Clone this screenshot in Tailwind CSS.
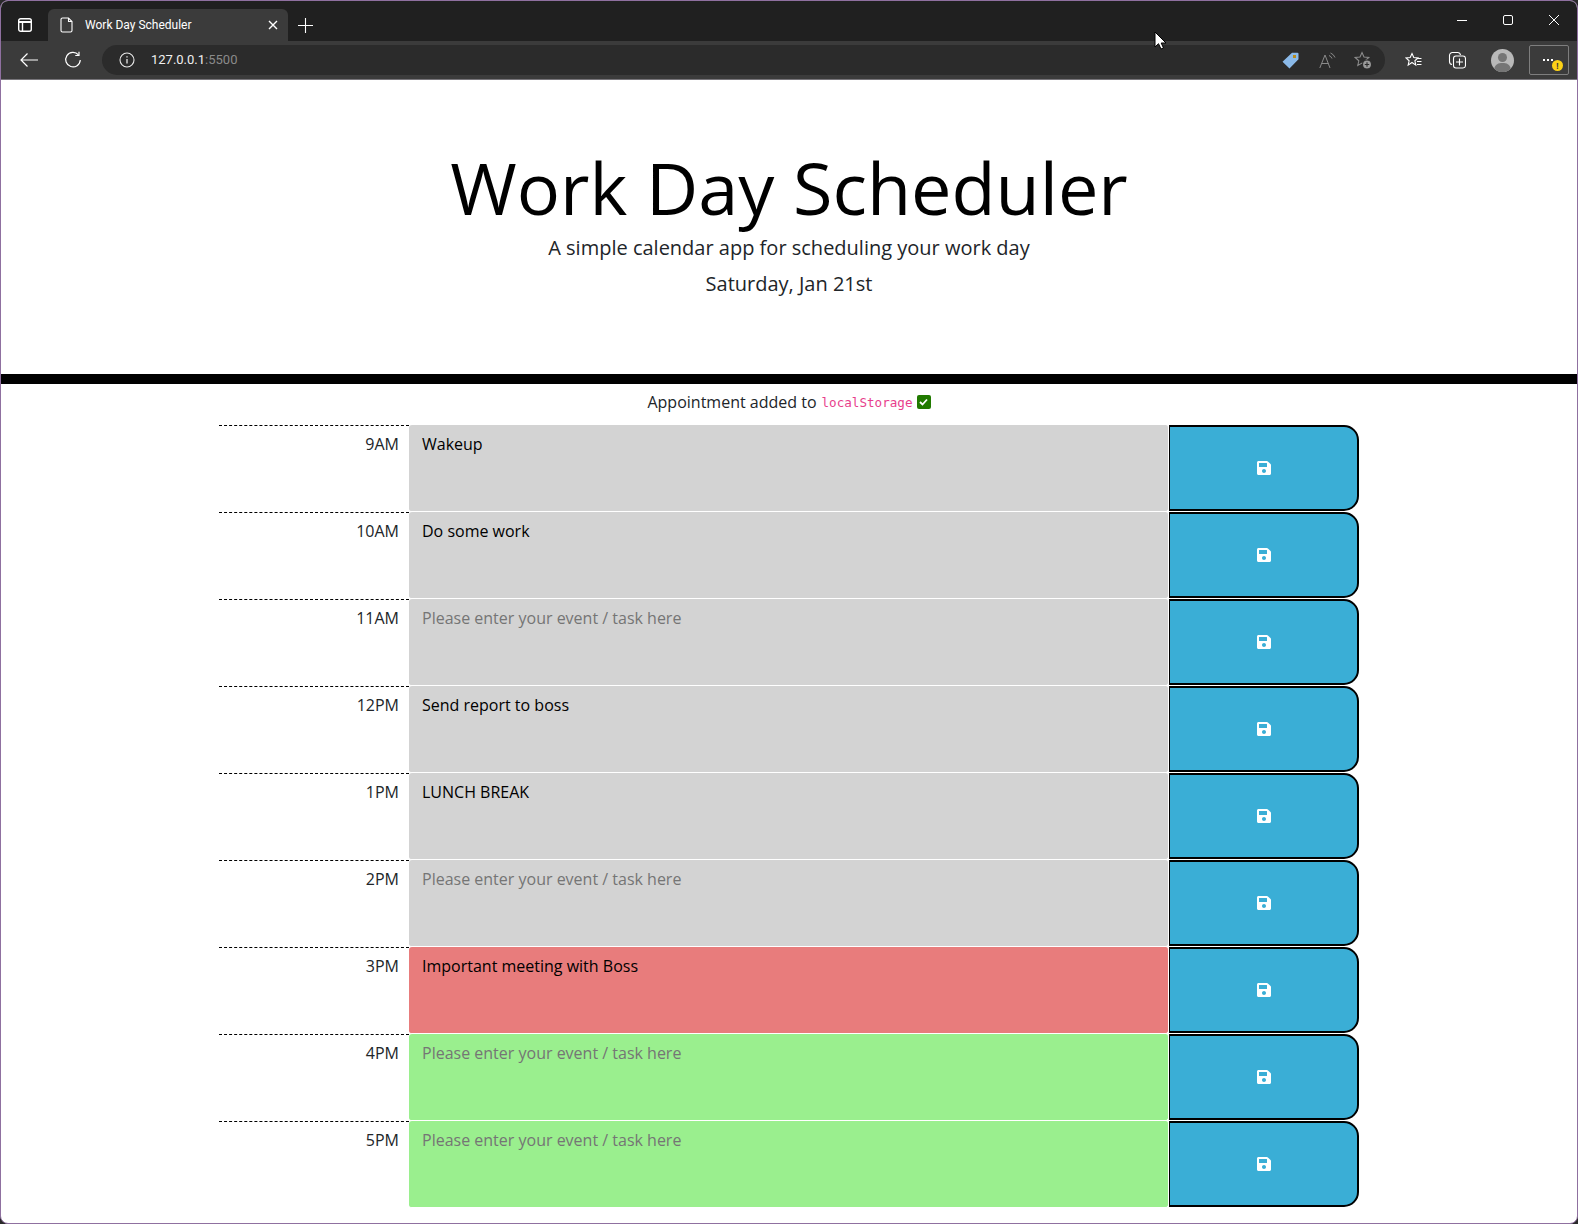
<!DOCTYPE html>
<html lang="en">
<head>
  <meta charset="UTF-8">
  <title>Work Day Scheduler</title>
  <script src="https://cdn.jsdelivr.net/npm/@tailwindcss/browser@4"></script>
</head>
<body class="bg-[#2a2a2a]">
  <div class="relative w-[1578px] h-[1224px] overflow-hidden rounded-[8px] border border-[#8f70a0] bg-white flex flex-col font-['Open_Sans',sans-serif] text-[#212529]">

    <!-- TAB STRIP -->
    <div class="h-[40px] bg-[#202020] flex items-end shrink-0 pl-[4px] text-white">
      <div class="w-[40px] h-[32px] flex items-center justify-center">
        <svg width="16" height="16" viewBox="0 0 16 16" fill="none" stroke="white" stroke-width="1.4"><rect x="1.700" y="1.700" width="12.600" height="12.600" rx="2"/><path d="M1.700 5h12.600" stroke-width="2"/><path d="M5.500 5v9"/></svg>
      </div>
      <div class="ml-[3px] w-[240px] h-[32px] bg-[#3b3b3b] rounded-t-[6px] flex items-center pl-[12px] pr-[10px]">
        <svg width="14" height="16" viewBox="0 0 14 16" fill="none" stroke="white" stroke-width="1.100"><path d="M2.500 1h6l3.500 3.500V13.500a1.500 1.500 0 0 1-1.500 1.500H2.500a1.500 1.500 0 0 1-1.500-1.500V2.500A1.500 1.500 0 0 1 2.500 1z"/><path d="M8.500 1v3.500H12"/></svg>
        <span class="ml-[11px] text-[12px] font-['Roboto',sans-serif] flex-1 truncate">Work Day Scheduler</span>
        <svg width="10" height="10" viewBox="0 0 10 10" stroke="white" stroke-width="1.400"><path d="M1 1l8 8M9 1l-8 8"/></svg>
      </div>
      <div class="w-[35px] h-[32px] flex items-center justify-center">
        <svg width="15" height="15" viewBox="0 0 15 15" stroke="white" stroke-width="1.100"><path d="M7.500 0v15M0 7.500h15"/></svg>
      </div>
      <div class="flex-1"></div>
      <div class="h-[38px] self-start flex items-center pr-[15px] gap-[30px]">
        <svg width="16" height="16" viewBox="0 0 16 16" stroke="white" stroke-width="1"><path d="M3 8.500h10"/></svg>
        <svg width="16" height="16" viewBox="0 0 16 16" fill="none" stroke="white" stroke-width="1"><rect x="3.500" y="3.500" width="9" height="9" rx="1.500"/></svg>
        <svg width="16" height="16" viewBox="0 0 16 16" stroke="white" stroke-width="1"><path d="M3 3l10 10M13 3L3 13"/></svg>
      </div>
    </div>

    <!-- TOOLBAR -->
    <div class="h-[39px] bg-[#3b3b3b] border-b-[1px] border-[#77757a] flex items-center shrink-0 pl-[18px] pr-[8px] text-white">
      <svg width="20" height="16" viewBox="0 0 20 16" fill="none" stroke="white" stroke-width="1.200"><path d="M19 8H2M8.500 1.500L2 8l6.500 6.500"/></svg>
      <svg class="ml-[25px]" width="18" height="18" viewBox="0 0 18 18" fill="none" stroke="white" stroke-width="1.200"><path d="M14.500 3.800A7.300 7.300 0 1 0 16.300 9"/><path d="M15 .8v3.700h-3.700"/></svg>
      <div class="ml-[20px] w-[1284px] h-[30px] bg-[#2b2b2b] rounded-[15px] flex items-center pl-[17px] pr-[13px]">
        <svg width="16" height="16" viewBox="0 0 16 16" fill="none" stroke="#e8e8e8" stroke-width="1.100"><circle cx="8" cy="8" r="7"/><path d="M8 7v4.500" stroke-width="1.300"/><path d="M8 4.200v1.300" stroke-width="1.300"/></svg>
        <span class="ml-[16px] text-[13px] font-['Roboto',sans-serif] text-[#f0f0f0]">127.0.0.1<span class="text-[#8a8a8a]">:5500</span></span>
        <div class="flex-1"></div>
        <svg width="17" height="17" viewBox="0 0 17 17"><path d="M10 .8h5.500a1 1 0 0 1 1 1v5.500L7.500 16.500.5 9.800z" fill="#8ab9e8"/><rect x="11" y="3" width="3" height="3" fill="#b78a1e"/></svg>
        <svg class="ml-[20px]" width="17" height="17" viewBox="0 0 17 17" fill="none" stroke="#8a8a8a" stroke-width="1"><path d="M.8 16L6 3l5 13M2.600 11.500h7"/><path d="M10 3.500a5 5 0 0 1 3 3M11.500 1a8 8 0 0 1 4.500 4.500"/></svg>
        <svg class="ml-[18px]" width="18" height="18" viewBox="0 0 18 18" fill="none" stroke="#8a8a8a" stroke-width="1.100"><path d="M8 1.500l2 4.500 4.800.5-3.600 3.300 1 4.700-4.200-2.400-4.200 2.400 1-4.700L1.200 6.500 6 6z"/><circle cx="13" cy="13.500" r="4.500" fill="#9a9a9a" stroke="#2b2b2b"/><path d="M13 11.300v4.400M10.800 13.500h4.400" stroke="#2b2b2b"/></svg>
      </div>
      <svg class="ml-[20px]" width="17" height="17" viewBox="0 0 17 17" fill="none" stroke="white" stroke-width="1.100"><path d="M7 1.500l1.800 4 4.200.4-3.100 2.900.9 4.300L7 10.500l-3.800 2.600.9-4.300L1 5.900l4.200-.4z"/><path d="M12 6.500h4.500M12 9.500h4.500M12 12.500h4.500"/></svg>
      <svg class="ml-[26px]" width="18" height="18" viewBox="0 0 18 18" fill="none" stroke="white" stroke-width="1.100"><path d="M4 13.500A3 3 0 0 1 1.500 10.500v-6A3 3 0 0 1 4.500 1.500h5A3 3 0 0 1 12.500 4"/><rect x="5.500" y="5" width="12" height="12" rx="2.500"/><path d="M11.500 7.500v7M8 11h7"/></svg>
      <div class="ml-[25px] w-[23px] h-[23px] rounded-full bg-[#b9b9b9] relative overflow-hidden">
        <div class="absolute left-[7px] top-[4px] w-[9px] h-[9px] rounded-full bg-[#767676]"></div>
        <div class="absolute left-[3px] top-[14px] w-[17px] h-[14px] rounded-full bg-[#767676]"></div>
      </div>
      <div class="ml-[15px] w-[40px] h-[30px] border-[1px] border-[#7e7e7e] rounded-[2px] relative">
        <div class="absolute left-[13px] top-[13px] flex gap-[2px]">
          <span class="w-[2px] h-[2px] bg-white"></span><span class="w-[2px] h-[2px] bg-white"></span><span class="w-[2px] h-[2px] bg-white"></span>
        </div>
        <div class="absolute left-[22px] top-[14px] w-[11px] h-[11px] rounded-full bg-[#fcd116] flex items-center justify-center text-[8px] font-bold leading-none text-[#3b3b3b]">!</div>
      </div>
    </div>

    <!-- PAGE -->
    <header class="h-[294px] shrink-0 flex flex-col items-center pt-[64px] text-black">
      <h1 class="text-[72px] leading-[86px] mb-[3px] font-normal">Work Day Scheduler</h1>
      <p class="text-[20px] leading-[30px] text-[#212529]">A simple calendar app for scheduling your work day</p>
      <p class="text-[20px] leading-[30px] mt-[6px] text-[#212529]">Saturday, Jan 21st</p>
    </header>
    <div class="h-[10px] bg-black shrink-0"></div>

    <div class="h-[41px] shrink-0 flex items-center justify-center text-[16px] pb-[5px]">
      Appointment added to
      <code class="ml-[5px] mt-[2px] text-[12.600px] font-['DejaVu_Sans_Mono',monospace] text-[#e83e8c]">localStorage</code>
      <span class="ml-[4px] w-[14px] h-[14px] bg-[#217a00] rounded-[2px] flex items-center justify-center">
        <svg width="9" height="8" viewBox="0 0 9 8" fill="none" stroke="white" stroke-width="1.800"><path d="M1 4l2.500 2.500L8 1.500"/></svg>
      </span>
    </div>

    <main id="hours" class="w-[1140px] ml-[218px] flex flex-col"></main>

    <!-- mouse pointer from the capture -->
    <svg class="absolute left-[1153px] top-[30px]" width="13" height="20" viewBox="0 0 13 20"><path d="M1 1v15l3.500-3.300L7 18l2.500-1-2.300-5H12z" fill="white" stroke="black"/></svg>
  </div>
  <script>
    const past = 'bg-[#d3d3d3]', present = 'bg-[#e87c7c]', future = 'bg-[#9aef8e]';
    const hours = [
      ['9AM', past, 'Wakeup'],
      ['10AM', past, 'Do some work'],
      ['11AM', past, ''],
      ['12PM', past, 'Send report to boss'],
      ['1PM', past, 'LUNCH BREAK'],
      ['2PM', past, ''],
      ['3PM', present, 'Important meeting with Boss'],
      ['4PM', future, ''],
      ['5PM', future, '']
    ];
    document.getElementById('hours').innerHTML = hours.map(([label, color, text]) => `
      <div class="h-[87px] flex">
        <div class="w-[190px] border-t border-dashed border-black text-right pt-[6px] pr-[10px] leading-[24px]">${label}</div>
        <textarea class="w-[760px] ${color} border-b border-r border-white rounded-[3px] pl-[13px] pr-[12px] pt-[7px] pb-[6px] leading-[24px] resize-none placeholder:text-[#757575] text-black" placeholder="Please enter your event / task here">${text}</textarea>
        <button class="w-[190px] h-[86px] bg-[#3aaed6] border-2 border-l-1 border-black rounded-r-[15px] flex items-center justify-center">
          <svg width="14" height="16" viewBox="0 0 448 512" fill="white"><path d="M433.941 129.941l-83.882-83.882A48 48 0 0 0 316.118 32H48C21.490 32 0 53.490 0 80v352c0 26.510 21.490 48 48 48h352c26.510 0 48-21.490 48-48V163.882a48 48 0 0 0-14.059-33.941zM224 416c-35.346 0-64-28.654-64-64 0-35.346 28.654-64 64-64s64 28.654 64 64c0 35.346-28.654 64-64 64zm96-304.520V212c0 6.627-5.373 12-12 12H76c-6.627 0-12-5.373-12-12V108c0-6.627 5.373-12 12-12h228.520c3.183 0 6.235 1.264 8.485 3.515l3.480 3.480A11.996 11.996 0 0 1 320 111.480z"/></svg>
        </button>
      </div>`).join('');
  </script>
</body>
</html>
